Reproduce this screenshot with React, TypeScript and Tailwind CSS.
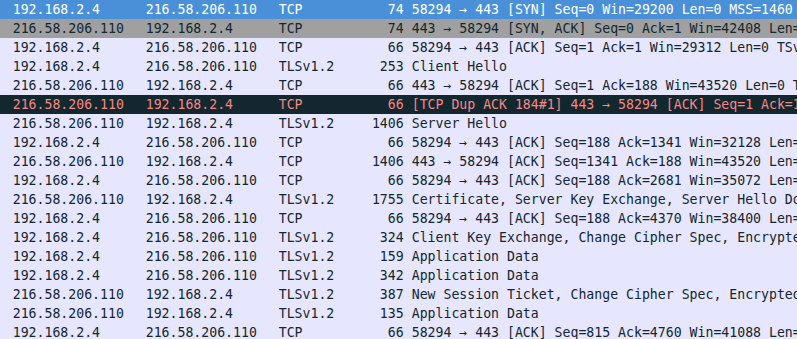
type Row = {
  src: string;
  dst: string;
  proto: string;
  len: number;
  info: string;
  kind?: "selected" | "related" | "bad";
};

const A = "192.168.2.4";
const B = "216.58.206.110";

const ROWS: Row[] = [
  { src: A, dst: B, proto: "TCP", len: 74, info: "58294 → 443 [SYN] Seq=0 Win=29200 Len=0 MSS=1460 SACK_PERM=1 TSval=1", kind: "selected" },
  { src: B, dst: A, proto: "TCP", len: 74, info: "443 → 58294 [SYN, ACK] Seq=0 Ack=1 Win=42408 Len=0 MSS=1380", kind: "related" },
  { src: A, dst: B, proto: "TCP", len: 66, info: "58294 → 443 [ACK] Seq=1 Ack=1 Win=29312 Len=0 TSval=1" },
  { src: A, dst: B, proto: "TLSv1.2", len: 253, info: "Client Hello" },
  { src: B, dst: A, proto: "TCP", len: 66, info: "443 → 58294 [ACK] Seq=1 Ack=188 Win=43520 Len=0 TSval=1" },
  { src: B, dst: A, proto: "TCP", len: 66, info: "[TCP Dup ACK 184#1] 443 → 58294 [ACK] Seq=1 Ack=188", kind: "bad" },
  { src: B, dst: A, proto: "TLSv1.2", len: 1406, info: "Server Hello" },
  { src: A, dst: B, proto: "TCP", len: 66, info: "58294 → 443 [ACK] Seq=188 Ack=1341 Win=32128 Len=0" },
  { src: B, dst: A, proto: "TCP", len: 1406, info: "443 → 58294 [ACK] Seq=1341 Ack=188 Win=43520 Len=1340" },
  { src: A, dst: B, proto: "TCP", len: 66, info: "58294 → 443 [ACK] Seq=188 Ack=2681 Win=35072 Len=0" },
  { src: B, dst: A, proto: "TLSv1.2", len: 1755, info: "Certificate, Server Key Exchange, Server Hello Done" },
  { src: A, dst: B, proto: "TCP", len: 66, info: "58294 → 443 [ACK] Seq=188 Ack=4370 Win=38400 Len=0" },
  { src: A, dst: B, proto: "TLSv1.2", len: 324, info: "Client Key Exchange, Change Cipher Spec, Encrypted Handshake Message" },
  { src: A, dst: B, proto: "TLSv1.2", len: 159, info: "Application Data" },
  { src: A, dst: B, proto: "TLSv1.2", len: 342, info: "Application Data" },
  { src: B, dst: A, proto: "TLSv1.2", len: 387, info: "New Session Ticket, Change Cipher Spec, Encrypted Handshake Message" },
  { src: B, dst: A, proto: "TLSv1.2", len: 135, info: "Application Data" },
  { src: A, dst: B, proto: "TCP", len: 66, info: "58294 → 443 [ACK] Seq=815 Ack=4760 Win=41088 Len=0 TSval=1" },
];

function rowClass(kind?: Row["kind"]) {
  if (kind === "selected") return "bg-[#4a90d9] text-white";
  if (kind === "related") return "bg-[#a0a0a0] text-[#12272e]";
  if (kind === "bad") return "bg-[#12272e] text-[#f78787]";
  return "bg-[#e7e6ff] text-[#12272e]";
}

export default function App() {
  return (
    <div className="h-[339px] w-[797px] overflow-hidden bg-[#e7e6ff] font-['DejaVu_Sans_Mono',monospace] text-[13.2px]">
      {ROWS.map((r, i) => (
        <div
          key={i}
          className={`flex h-[19px] items-center whitespace-nowrap pl-[12.7px] leading-[19px] ${rowClass(r.kind)} ${
            i === ROWS.length - 1 ? "border-b border-dashed border-[#12272e]" : ""
          }`}
        >
          <span className="w-[133px] shrink-0">{r.src}</span>
          <span className="w-[133px] shrink-0">{r.dst}</span>
          <span className="w-[80px] shrink-0">{r.proto}</span>
          <span className="w-[45px] shrink-0 text-right">{r.len}</span>
          <span className="shrink-0 pl-[8px]">{r.info}</span>
        </div>
      ))}
    </div>
  );
}
